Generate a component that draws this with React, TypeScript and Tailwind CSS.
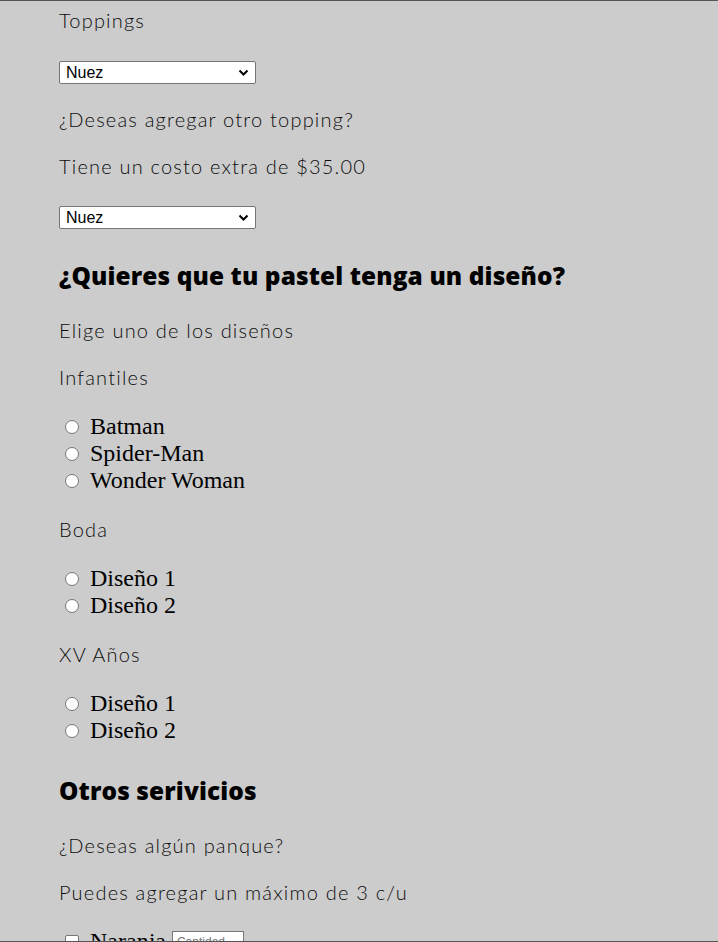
import React from "react";

const label = "font-['Lato',sans-serif] font-light text-[20px] leading-[27px] tracking-[0.06em] text-[#0d0d0d]";
const heading = "font-['Open_Sans',sans-serif] font-extrabold text-[24.4px] leading-[35px] tracking-[0.005em] text-black";
const radioText = "font-['Liberation_Serif',serif] text-[24px] leading-[27px] text-black";

function Select({ className }: { className?: string }) {
  return (
    <div className={"relative w-[197px] h-[23px] bg-white border border-[#767676] rounded-[2px] flex items-center " + (className ?? "")}>
      <span className="pl-[6px] font-['Liberation_Sans',sans-serif] text-[16px] leading-[20px] text-black">Nuez</span>
      <svg className="absolute right-[6px] top-[7px]" width="11" height="8" viewBox="0 0 11 8">
        <path d="M1.5 1.5 L5.5 5.5 L9.5 1.5" fill="none" stroke="#000" strokeWidth="2" />
      </svg>
    </div>
  );
}

function Radio({ text }: { text: string }) {
  return (
    <div className="flex items-center h-[27px]">
      <span className="ml-[6px] w-[14px] h-[14px] rounded-full border border-[#767676] bg-white" />
      <span className={"ml-[11px] " + radioText}>{text}</span>
    </div>
  );
}

export default function App() {
  return (
    <div className="h-[942px] overflow-hidden bg-[#cccccc] border-t border-b border-[#555]">
      <div className="pl-[59px] flex flex-col">
        <p className={"mt-[6px] " + label}>Toppings</p>
        <Select className="mt-[27px]" />
        <p className={"mt-[22px] " + label}>¿Deseas agregar otro topping?</p>
        <p className={"mt-[20px] " + label}>Tiene un costo extra de $35.00</p>
        <Select className="mt-[26px]" />
        <h2 className={"mt-[29px] " + heading}>¿Quieres que tu pastel tenga un diseño?</h2>
        <p className={"mt-[24px] " + label}>Elige uno de los diseños</p>
        <p className={"mt-[20px] " + label}>Infantiles</p>
        <div className="mt-[22px] flex flex-col">
          <Radio text="Batman" />
          <Radio text="Spider-Man" />
          <Radio text="Wonder Woman" />
        </div>
        <p className={"mt-[22px] " + label}>Boda</p>
        <div className="mt-[22px] flex flex-col">
          <Radio text="Diseño 1" />
          <Radio text="Diseño 2" />
        </div>
        <p className={"mt-[22px] " + label}>XV Años</p>
        <div className="mt-[22px] flex flex-col">
          <Radio text="Diseño 1" />
          <Radio text="Diseño 2" />
        </div>
        <h2 className={"mt-[29px] " + heading}>Otros serivicios</h2>
        <p className={"mt-[24px] " + label}>¿Deseas algún panque?</p>
        <p className={"mt-[20px] " + label}>Puedes agregar un máximo de 3 c/u</p>
        <div className="mt-[22px] flex items-center h-[27px]">
          <span className="ml-[6px] w-[14px] h-[14px] rounded-[2px] border border-[#767676] bg-white" />
          <span className={"ml-[11px] " + radioText}>Naranja</span>
          <span className="ml-[6px] w-[72px] h-[22px] bg-white border border-[#767676] flex items-center pl-[4px] font-['Liberation_Sans',sans-serif] text-[12px] text-[#757575]">Cantidad</span>
        </div>
      </div>
    </div>
  );
}
